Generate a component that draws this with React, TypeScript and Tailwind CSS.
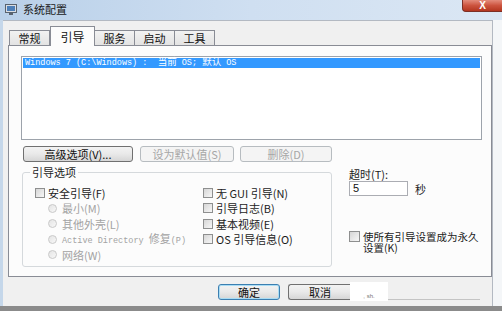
import React from 'react'

// ─── Small widgets ─────────────────────────────────────────

const FONT = "font-['Noto_Sans_CJK_SC','Noto_Sans',sans-serif]"

function Check({ label }: { label: string }) {
  return (
    <div className="flex items-center h-[15.5px]">
      <span className="w-[10px] h-[10px] border border-[#8e8f8f] bg-gradient-to-br from-[#d6d6d6] to-[#f7f7f7] shrink-0" />
      <span className="ml-[3px] text-[11px] leading-[12px] text-[#1b1b1b] whitespace-nowrap">{label}</span>
    </div>
  )
}

function Radio({ label, mono }: { label: React.ReactNode; mono?: boolean }) {
  return (
    <div className="flex items-center h-[15.5px] pl-[13px]">
      <span className="w-[9px] h-[9px] rounded-full border border-[#c9c9c9] bg-gradient-to-br from-[#e4e4e4] to-[#f8f8f8] shrink-0" />
      <span
        className={`ml-[5px] leading-[12px] text-[#a3a3a3] whitespace-nowrap ${mono ? "font-['Liberation_Mono','Noto_Sans_CJK_SC',monospace] text-[8.5px]" : 'text-[11px]'}`}
      >
        {label}
      </span>
    </div>
  )
}

function Btn({ label, width, disabled, focused }: { label: string; width: string; disabled?: boolean; focused?: boolean }) {
  const base = 'h-[16px] rounded-[3px] flex items-center justify-center text-[11px] leading-[12px] shrink-0'
  if (disabled) {
    return <div className={`${base} ${width} border border-[#b7bcc0] bg-[#f4f4f4] text-[#a6a6a6]`}>{label}</div>
  }
  return (
    <div
      className={`${base} ${width} border ${focused ? 'border-[#3c7fb1] shadow-[inset_0_0_0_1px_#a9dcf4]' : 'border-[#707070]'} bg-gradient-to-b from-[#f3f3f3] via-[#e9e9e9] to-[#d6d6d6] text-[#111]`}
    >
      {label}
    </div>
  )
}

// ─── Main ─────────────────────────────────────────────────

export default function App() {
  const tabs = ['常规', '引导', '服务', '启动', '工具']

  return (
    <div className={`w-[502px] h-[311px] overflow-hidden bg-[#eef2f6] flex flex-col ${FONT}`}>
      {/* Title bar */}
      <div className="h-[20px] shrink-0 flex items-start bg-gradient-to-r from-[#b9d0e9] via-[#cfdff1] to-[#dbe7f4]">
        <svg className="ml-[5px] mt-[4px]" width="12" height="11" viewBox="0 0 12 11">
          <rect x="0.5" y="0.5" width="11" height="8" fill="#d9dde3" stroke="#59636f" />
          <rect x="2" y="2" width="8" height="5" fill="#4d7fb8" />
          <rect x="4" y="9" width="4" height="2" fill="#59636f" />
        </svg>
        <span className="ml-[6px] mt-[3px] text-[11px] leading-[13px] text-[#1a1a1a]">系统配置</span>
        <div className="ml-auto w-[40px] h-[12px] shrink-0 rounded-bl-[4px] border border-t-0 border-r-0 border-[#7d2f25] bg-[#c9503b] bg-gradient-to-b from-[#e38b7b] via-[#cc533e] to-[#b3361f] flex items-center justify-center">
          <span className="text-white text-[10px] leading-[10px] font-bold font-['Liberation_Sans',sans-serif]">X</span>
        </div>
      </div>

      {/* Window body */}
      <div className="h-[286px] shrink-0 flex">
        <div className="w-[3px] bg-[#c5d7ea]" />
        <div className="w-[490px] bg-[#f0f0f0] border-t border-r border-[#b3b9c2] flex flex-col">
          {/* Tabs */}
          <div className="h-[24px] pl-[6px] flex items-end">
            {tabs.map((t, i) =>
              i === 1 ? (
                <div
                  key={t}
                  className="relative z-10 h-[20px] -mb-[1px] w-[45px] border border-b-0 border-[#898c95] bg-[#fcfcfc] flex items-center justify-center text-[12px] leading-[14px] text-[#111]"
                >
                  {t}
                </div>
              ) : (
                <div
                  key={t}
                  className={`h-[15px] w-[41px] border border-b-0 border-[#898c95] ${i > 1 ? '-ml-[1px]' : ''} bg-gradient-to-b from-[#f2f2f2] to-[#e3e3e3] flex items-center justify-center text-[11px] leading-[12px] text-[#111]`}
                >
                  {t}
                </div>
              ),
            )}
          </div>

          {/* Tab panel */}
          <div className="ml-[5px] w-[484px] h-[232px] border border-[#898c95] bg-[#fcfcfc] flex flex-col">
            {/* OS list */}
            <div className="ml-[12px] mt-[10px] w-[461px] h-[84px] border border-[#9da3ab] bg-white p-[1px]">
              <div className="h-[10px] bg-[#3399ff] flex items-center pl-[2px] text-white whitespace-nowrap font-['Liberation_Mono','Noto_Sans_CJK_SC',monospace] text-[8.5px] leading-[10px]">
                Windows 7 (C:\Windows) : &nbsp;<span className="text-[9.5px]">当前</span>&nbsp;OS;&nbsp;<span className="text-[9.5px]">默认</span>&nbsp;OS
              </div>
            </div>

            {/* Buttons */}
            <div className="ml-[14px] mt-[6px] flex">
              <Btn label="高级选项(V)..." width="w-[110px]" />
              <div className="ml-[7px]">
                <Btn label="设为默认值(S)" width="w-[94px]" disabled />
              </div>
              <div className="ml-[6px]">
                <Btn label="删除(D)" width="w-[92px]" disabled />
              </div>
            </div>

            {/* Lower area */}
            <div className="flex items-start">
              <fieldset className="ml-[13px] mt-[4px] w-[310px] h-[101px] border border-[#d5d9dc] rounded-[3px] px-[12px]">
                <legend className="ml-[-5px] px-[2px] text-[11px] leading-[12px] text-[#1b1b1b]">引导选项</legend>
                <div className="flex pt-[7px]">
                  <div className="w-[168px] flex flex-col">
                    <Check label="安全引导(F)" />
                    <Radio label="最小(M)" />
                    <Radio label="其他外壳(L)" />
                    <Radio
                      mono
                      label={
                        <>
                          Active Directory <span className="text-[11px] font-['Noto_Sans_CJK_SC',sans-serif]">修复</span>(P)
                        </>
                      }
                    />
                    <Radio label="网络(W)" />
                  </div>
                  <div className="flex flex-col">
                    <Check label="无 GUI 引导(N)" />
                    <Check label="引导日志(B)" />
                    <Check label="基本视频(E)" />
                    <Check label="OS 引导信息(O)" />
                  </div>
                </div>
              </fieldset>

              <div className="ml-[17px] mt-[6px] flex flex-col">
                <span className="text-[11px] leading-[12px] text-[#1b1b1b]">超时(T):</span>
                <div className="mt-[1px] flex items-center">
                  <div className="w-[59px] h-[15px] border border-[#abadb3] bg-white pl-[3px] text-[11px] leading-[13px] text-[#111] font-['Liberation_Sans',sans-serif]">
                    5
                  </div>
                  <span className="ml-[7px] text-[11px] leading-[12px] text-[#1b1b1b]">秒</span>
                </div>
                <div className="mt-[35px] flex items-start">
                  <span className="w-[11px] h-[11px] border border-[#8e8f8f] bg-gradient-to-br from-[#d6d6d6] to-[#f7f7f7] shrink-0" />
                  <span className="ml-[3px] w-[120px] text-[10.5px] leading-[11px] text-[#1b1b1b]">
                    使所有引导设置成为永久设置(K)
                  </span>
                </div>
              </div>
            </div>
          </div>

          {/* Dialog buttons */}
          <div className="ml-[215px] mt-[7px] flex items-start">
            <Btn label="确定" width="w-[62px]" focused />
            <div className="ml-[8px] w-[62px] h-[16px] rounded-l-[3px] border border-r-0 border-[#707070] bg-gradient-to-b from-[#f3f3f3] via-[#e9e9e9] to-[#d6d6d6] flex items-center pl-[20px] text-[11px] leading-[12px] text-[#111]">
              取消
            </div>
            <div className="-mt-[2px] w-[38px] h-[19px] bg-white flex items-end justify-center pb-[2px] text-[6px] leading-[6px] text-[#777] font-['Liberation_Sans',sans-serif]">
              , sh.
            </div>
            <div className="mt-[15px] w-[92px] h-[1px] bg-[#c4c4c4]" />
          </div>
        </div>
        <div className="flex-1 bg-[#f4f6f8]" />
      </div>

      {/* Bottom edge */}
      <div className="flex-1 bg-[#8b8b8b]" />
    </div>
  )
}
